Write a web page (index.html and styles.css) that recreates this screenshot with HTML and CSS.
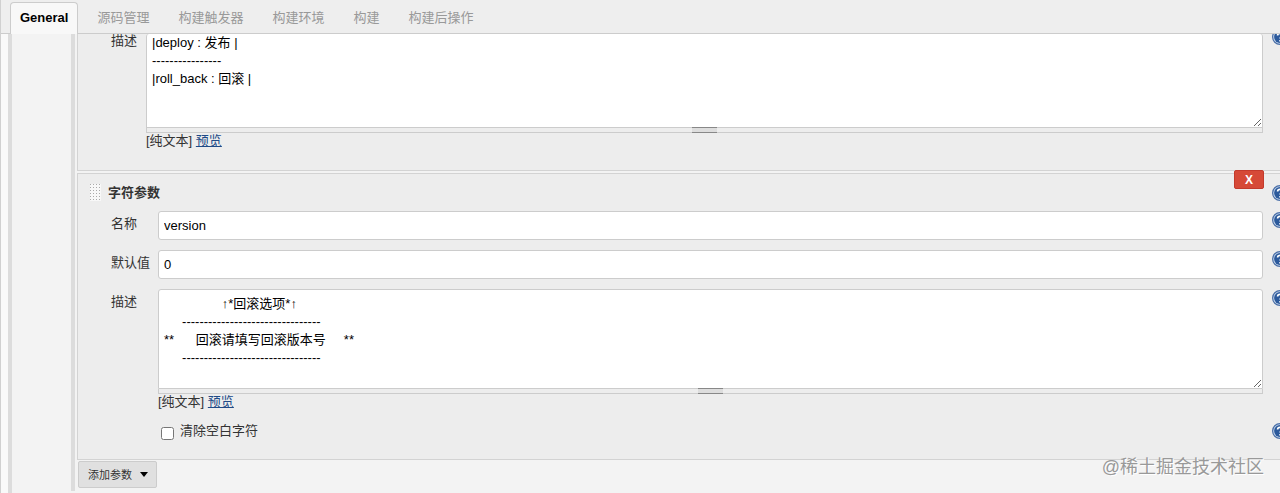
FILE: index.html
```
<!doctype html>
<html lang="zh-CN">
<head>
<meta charset="utf-8">
<title>General</title>
<link rel="stylesheet" href="styles.css">
</head>
<body>

<!-- shared help icon -->
<svg class="defs" width="0" height="0" aria-hidden="true">
  <symbol id="help-icon" viewBox="0 0 16 16">
    <circle cx="8" cy="8" r="7.4" fill="#c9d8ec" stroke="#4a6fa8" stroke-width="1.2"/>
    <circle cx="8" cy="8" r="5.9" fill="#2c5a9c"/>
    <path d="M5.6 6.4C5.6 3.6 10.6 3.6 10.6 6.4C10.6 8 8.1 8 8.1 9.6M8.1 11v1.5" fill="none" stroke="#fff" stroke-width="1.7"/>
  </symbol>
</svg>

<nav class="tabs">
  <a class="tab active" href="#general">General</a>
  <a class="tab" href="#scm">源码管理</a>
  <a class="tab" href="#triggers">构建触发器</a>
  <a class="tab" href="#environment">构建环境</a>
  <a class="tab" href="#build">构建</a>
  <a class="tab" href="#post-build">构建后操作</a>
</nav>

<main class="workspace">
  <div class="rail rail-outer"></div>
  <div class="rail rail-inner"></div>

  <form class="params">
    <section class="param param-choice">
      <div class="row">
        <label for="choice-desc">描述</label>
        <div class="field">
          <textarea id="choice-desc" class="scrolled">|deploy : 发布 |
----------------
|roll_back : 回滚 |</textarea>
          <div class="grip"></div>
          <div class="format">[纯文本] <a href="#preview">预览</a></div>
        </div>
        <a class="help" href="#help" aria-label="帮助"><svg><use href="#help-icon"/></svg></a>
      </div>
    </section>

    <section class="param param-string">
      <button type="button" class="delete">X</button>
      <header class="param-head">
        <svg class="drag" width="11" height="17" viewBox="0 0 11 17">
          <defs><pattern id="dots" width="3" height="3" patternUnits="userSpaceOnUse"><rect width="1" height="1" fill="#aaa"/></pattern></defs>
          <rect width="11" height="17" fill="#f8f8f8"/>
          <rect width="11" height="17" fill="url(#dots)"/>
        </svg>
        <h2>字符参数</h2>
        <a class="help" href="#help" aria-label="帮助"><svg><use href="#help-icon"/></svg></a>
      </header>
      <div class="row">
        <label for="name">名称</label>
        <div class="field"><input id="name" type="text" value="version"></div>
        <a class="help" href="#help" aria-label="帮助"><svg><use href="#help-icon"/></svg></a>
      </div>
      <div class="row">
        <label for="default">默认值</label>
        <div class="field"><input id="default" type="text" value="0"></div>
        <a class="help" href="#help" aria-label="帮助"><svg><use href="#help-icon"/></svg></a>
      </div>
      <div class="row">
        <label for="desc">描述</label>
        <div class="field">
          <textarea id="desc">                ↑*回滚选项*↑
     --------------------------------
**      回滚请填写回滚版本号     **
     --------------------------------</textarea>
          <div class="grip"></div>
          <div class="format">[纯文本] <a href="#preview">预览</a></div>
        </div>
        <a class="help" href="#help" aria-label="帮助"><svg><use href="#help-icon"/></svg></a>
      </div>
      <div class="row">
        <span></span>
        <div class="field check">
          <input id="trim" type="checkbox">
          <label for="trim">清除空白字符</label>
        </div>
        <a class="help" href="#help" aria-label="帮助"><svg><use href="#help-icon"/></svg></a>
      </div>
    </section>

    <button type="button" class="add">添加参数
      <svg width="8" height="5" viewBox="0 0 8 5"><path d="M0 0h8L4 5z"/></svg>
    </button>
  </form>
</main>

<div class="watermark">@稀土掘金技术社区</div>

</body>
</html>
```
FILE: styles.css
```
* {
  box-sizing: border-box;
}

body {
  margin: 0;
  min-height: 100vh;
  display: flex;
  flex-direction: column;
  overflow: hidden;
  position: relative;
  border-left: 1px solid #d0d0d0;
  background: #f3f3f3;
  color: #333;
  font: 13px/18px "Liberation Sans", "Noto Sans CJK SC", sans-serif;
}

input, textarea, button {
  font: inherit;
}

.defs {
  position: absolute;
}

/* tabs */
.tabs {
  display: flex;
  align-items: flex-end;
  gap: 29px;
  height: 34px;
  padding-left: 9px;
  border-bottom: 1px solid #ccc;
  background: #eee;
}
.tab {
  padding: 6px 0;
  color: #999;
  text-decoration: none;
}
.tab.active {
  margin: 0 -10px -1px 0;
  padding: 6px 9px 7px;
  border: 1px solid #ccc;
  border-bottom: 0;
  border-radius: 4px 4px 0 0;
  background: #f8f8f8;
  color: #000;
  font-weight: bold;
}

/* page frame */
.workspace {
  flex: 1;
  display: flex;
  overflow: hidden;
}
.rail {
  border-right: 4px solid #dcdcdc;
}
.rail-outer {
  width: 11px;
  background: #f9f9f9;
}
.rail-inner {
  width: 63px;
  margin-bottom: 2px;
}
.params {
  flex: 1;
  min-width: 0;
  padding-left: 2px;
}

/* parameter blocks */
.param {
  position: relative;
  border: 1px solid #d3d3d3;
  border-right: 0;
  background: #ededed;
  padding-left: 33px;
}
.param-choice {
  border-top: 0;
  padding-bottom: 19px;
  margin-bottom: 2px;
}
.param-string {
  padding-top: 8px;
  padding-bottom: 19px;
  margin-bottom: 1px;
}
.row {
  display: grid;
  grid-template-columns: 47px 1fr 8px;
  margin-bottom: 10px;
}
.param-choice .row {
  grid-template-columns: 35px 1fr 8px;
  margin-bottom: 0;
}
.row > label {
  padding-top: 4px;
}
.param-choice .row > label {
  padding-top: 0;
  line-height: 14px;
}
.row:last-child {
  margin-bottom: 0;
}
.field {
  min-width: 0;
  margin-right: 9px;
}
.help {
  width: 8px;
  height: 16px;
  margin-top: 1px;
}
.help svg {
  display: block;
  width: 16px;
  height: 16px;
}
.param-choice .help {
  margin-top: -5px;
}

.param-head {
  display: flex;
  align-items: center;
  margin: 0 0 8px -21px;
}
.param-head h2 {
  flex: 1;
  margin: 0 0 0 7px;
  font-size: 13px;
  line-height: 21px;
}

input[type="text"],
textarea {
  display: block;
  width: 100%;
  border: 1px solid #ccc;
  border-radius: 3px;
  background: #fff;
  color: #000;
  padding: 5px;
}
input[type="text"] {
  height: 29px;
}
textarea {
  height: 100px;
  border-radius: 3px 3px 0 0;
  resize: vertical;
}
textarea.scrolled {
  height: 94px;
  padding-top: 0;
  border-top: 0;
}

/* drag bar under a textarea */
.grip {
  display: flex;
  justify-content: center;
  align-items: center;
  height: 5px;
  border: 1px solid #ccc;
  border-top: 0;
}
.grip::after {
  content: "";
  width: 25px;
  height: 4px;
  border: solid #888;
  border-width: 1px 0;
  background: #ddd;
}
.format {
  line-height: 16px;
  margin-bottom: 2px;
}
.format a {
  color: #204a87;
}

.check {
  display: flex;
  align-items: flex-start;
  gap: 6px;
}
.check input {
  margin: 5px 0 0 3px;
}

.delete {
  position: absolute;
  top: -4px;
  right: 16px;
  width: 30px;
  height: 19px;
  padding: 0;
  border: 1px solid #c33a2c;
  border-radius: 2px;
  background: #d64937;
  color: #fff;
  font-size: 12px;
  font-weight: bold;
  line-height: 16px;
}
.add {
  display: flex;
  align-items: center;
  gap: 8px;
  height: 27px;
  padding: 0 8px 0 9px;
  border: 1px solid #ccc;
  border-radius: 2px;
  background: #e0e0e0;
  color: #333;
  font-size: 11px;
  margin-left: 1px;
}

.watermark {
  position: absolute;
  right: 16px;
  bottom: 14px;
  color: #999;
  font-size: 18px;
  line-height: 24px;
  text-shadow: 1px 1px 0 #fff;
}
```
